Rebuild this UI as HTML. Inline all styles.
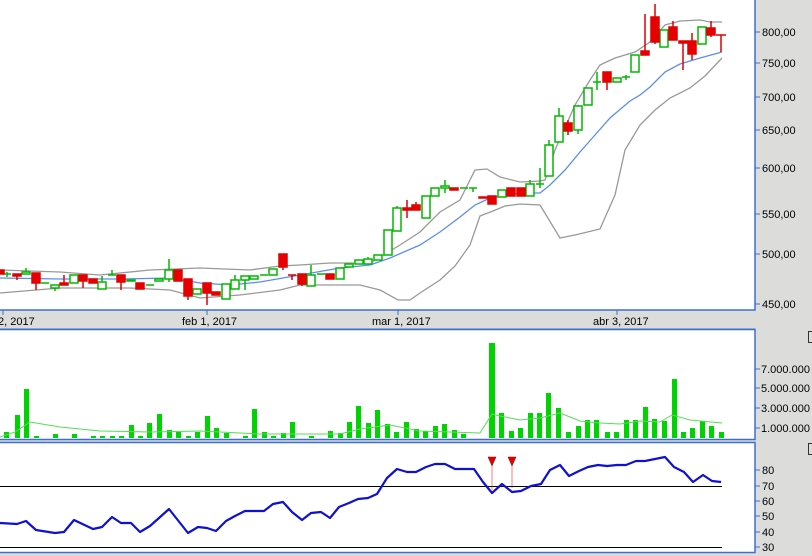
<!DOCTYPE html>
<html><head><meta charset="utf-8"><style>
html,body{margin:0;padding:0;width:812px;height:556px;overflow:hidden;background:#dcdddb;font-family:"Liberation Sans",sans-serif}
svg{position:absolute;left:0;top:0}
text{font-family:"Liberation Sans",sans-serif;font-size:11px;fill:#000}
</style></head><body>
<svg width="812" height="556" viewBox="0 0 812 556">
<rect x="0" y="0" width="812" height="556" fill="#dcdddb"/>
<!-- panels -->
<rect x="-1" y="-1" width="756" height="311" fill="#fff" stroke="#3b6fcf" stroke-width="1.5"/>
<rect x="-1" y="329.5" width="756" height="110" fill="#fff" stroke="#3b6fcf" stroke-width="1.5"/>
<rect x="-1" y="442.5" width="756" height="110" fill="#fff" stroke="#3b6fcf" stroke-width="1.5"/>
<line x1="0" y1="329" x2="755" y2="329" stroke="#3b6fcf" stroke-width="1"/>
<!-- date axis -->
<g stroke="#3b6fcf"><line x1="3" y1="310" x2="3" y2="315"/><line x1="207" y1="310" x2="207" y2="315"/><line x1="398" y1="310" x2="398" y2="315"/><line x1="617" y1="310" x2="617" y2="315"/></g>
<text x="-2" y="325">2, 2017</text>
<text x="182" y="325">feb 1, 2017</text>
<text x="372" y="325">mar 1, 2017</text>
<text x="593" y="325">abr 3, 2017</text>
<!-- price axis -->
<g stroke="#3b6fcf"><line x1="755" y1="32" x2="760" y2="32"/><line x1="755" y1="63" x2="760" y2="63"/><line x1="755" y1="97" x2="760" y2="97"/><line x1="755" y1="130" x2="760" y2="130"/><line x1="755" y1="168" x2="760" y2="168"/><line x1="755" y1="214" x2="760" y2="214"/><line x1="755" y1="254" x2="760" y2="254"/><line x1="755" y1="304" x2="760" y2="304"/></g>
<text x="762" y="36">800,00</text><text x="762" y="67">750,00</text><text x="762" y="101">700,00</text><text x="762" y="134">650,00</text><text x="762" y="172">600,00</text><text x="762" y="218">550,00</text><text x="762" y="258">500,00</text><text x="762" y="308">450,00</text>
<!-- volume axis -->
<g stroke="#3b6fcf"><line x1="755" y1="369" x2="760" y2="369"/><line x1="755" y1="388" x2="760" y2="388"/><line x1="755" y1="408" x2="760" y2="408"/><line x1="755" y1="428" x2="760" y2="428"/></g>
<text x="761" y="373">7.000.000</text><text x="761" y="392">5.000.000</text><text x="761" y="412">3.000.000</text><text x="761" y="432">1.000.000</text>
<!-- rsi axis -->
<g stroke="#3b6fcf"><line x1="755" y1="470" x2="760" y2="470"/><line x1="755" y1="486" x2="760" y2="486"/><line x1="755" y1="501" x2="760" y2="501"/><line x1="755" y1="516" x2="760" y2="516"/><line x1="755" y1="532" x2="760" y2="532"/><line x1="755" y1="547" x2="760" y2="547"/></g>
<text x="762" y="474">80</text><text x="762" y="490">70</text><text x="762" y="505">60</text><text x="762" y="520">50</text><text x="762" y="536">40</text><text x="762" y="551">30</text>
<!-- small boxes -->
<rect x="808.5" y="331.5" width="6" height="11" fill="#dcdddb" stroke="#333"/>
<rect x="808.5" y="443.5" width="6" height="11" fill="#dcdddb" stroke="#333"/>

<!-- bands -->
<polyline fill="none" stroke="#999" stroke-width="1.3" points="0,270 60,272 100,275 150,270 200,268 250,270 280,266 300,265 330,263 370,263 400,245 420,232 440,212 460,200 475,170 487,169 500,177 520,182 540,181 545,180 555,150 575,105 590,80 600,65 615,58 625,55 635,52 650,42 665,25 680,21 700,20 710,22 722,22"/>
<polyline fill="none" stroke="#999" stroke-width="1.3" points="0,293 60,288 100,288 130,288 170,290 200,298 240,295 280,290 300,285 330,285 360,285 380,290 398,300 410,300 420,293 440,280 455,266 470,245 480,216 493,211 505,206 520,204 540,205 560,238 575,235 600,229 615,195 625,150 640,125 655,110 670,98 690,88 705,76 722,58"/>
<polyline fill="none" stroke="#5b8cf5" stroke-width="1.3" points="0,278 60,279 120,279 170,278 200,283 230,285 260,282 300,275 340,268 370,265 390,258 420,245 440,232 460,217 475,205 490,198 520,193 540,193 550,185 565,170 580,152 595,135 610,118 630,101 640,95 650,87 665,72 680,64 700,58 722,52"/>

<!-- candles -->
<g stroke-width="1.5">
<g stroke="#00b800" fill="#fff">
<line x1="7" y1="272" x2="7" y2="277"/><line x1="3" y1="274" x2="11" y2="274"/>
<line x1="26" y1="268" x2="26" y2="272"/><rect x="22" y="272" width="8" height="2"/>
<line x1="41" y1="283" x2="49" y2="283"/>
<line x1="55" y1="288" x2="55" y2="291"/><rect x="51" y="285" width="8" height="3"/>
<rect x="70" y="275" width="8" height="8"/>
<line x1="102" y1="276" x2="102" y2="282"/><rect x="98" y="282" width="8" height="7"/>
<line x1="112" y1="270" x2="112" y2="275"/><line x1="108" y1="275" x2="116" y2="275"/>
<rect x="127" y="280" width="8" height="1"/>
<line x1="146" y1="285" x2="154" y2="285"/>
<rect x="155" y="279" width="8" height="2"/>
<line x1="169" y1="259" x2="169" y2="282"/><rect x="165" y="270" width="8" height="9"/>
<rect x="193" y="289" width="8" height="5"/>
<rect x="222" y="284" width="8" height="15"/>
<line x1="235" y1="275" x2="235" y2="280"/><rect x="231" y="280" width="8" height="9"/>
<line x1="245" y1="280" x2="245" y2="290"/><rect x="241" y="276" width="8" height="4"/>
<rect x="250" y="276" width="8" height="3"/>
<line x1="260" y1="275" x2="268" y2="275"/>
<rect x="269" y="269" width="8" height="6"/>
<line x1="311" y1="265" x2="311" y2="275"/><rect x="307" y="275" width="8" height="11"/>
<line x1="317" y1="274" x2="325" y2="274"/>
<rect x="336" y="268" width="8" height="11"/>
<rect x="345" y="264" width="8" height="3"/>
<rect x="355" y="260" width="8" height="4"/>
<line x1="368" y1="257" x2="368" y2="259"/><rect x="364" y="259" width="8" height="5"/>
<rect x="374" y="255" width="8" height="5"/>
<rect x="384" y="230" width="8" height="25"/>
<line x1="397" y1="206" x2="397" y2="208"/><rect x="393" y="208" width="8" height="23"/>
<rect x="422" y="196" width="8" height="22"/>
<rect x="431" y="188" width="8" height="8"/>
<line x1="445" y1="180" x2="445" y2="193"/><rect x="441" y="186" width="8" height="2"/>
<line x1="460" y1="188" x2="468" y2="188"/><line x1="469" y1="188" x2="477" y2="188"/><line x1="473" y1="188" x2="473" y2="192"/>
<rect x="498" y="190" width="8" height="7"/>
<line x1="530" y1="180" x2="530" y2="184"/><rect x="526" y="184" width="8" height="12"/>
<line x1="540" y1="168" x2="540" y2="188"/><line x1="536" y1="184" x2="544" y2="184"/>
<line x1="549" y1="140" x2="549" y2="145"/><rect x="545" y="145" width="8" height="31"/>
<line x1="559" y1="108" x2="559" y2="116"/><rect x="555" y="116" width="8" height="26"/>
<line x1="578" y1="105" x2="578" y2="134"/><rect x="574" y="106" width="8" height="24"/>
<rect x="584" y="88" width="8" height="17"/>
<line x1="597" y1="72" x2="597" y2="90"/><line x1="593" y1="82" x2="601" y2="82"/>
<rect x="613" y="78" width="8" height="4"/>
<line x1="622" y1="77" x2="630" y2="77"/><line x1="626" y1="75" x2="626" y2="80"/>
<rect x="631" y="55" width="8" height="17"/>
<rect x="660" y="30" width="8" height="17"/>
<rect x="698" y="27" width="8" height="17"/>
</g>
<g stroke="#e00000" fill="#e80000">
<rect x="-4" y="270" width="8" height="4"/>
<line x1="17" y1="274" x2="17" y2="280"/><rect x="13" y="274" width="8" height="2"/>
<line x1="36" y1="283" x2="36" y2="290"/><rect x="32" y="273" width="8" height="10"/>
<line x1="64" y1="275" x2="64" y2="283"/><rect x="60" y="283" width="8" height="2"/>
<line x1="83" y1="281" x2="83" y2="288"/><rect x="79" y="275" width="8" height="6"/>
<rect x="89" y="279" width="8" height="4"/>
<line x1="121" y1="282" x2="121" y2="290"/><rect x="117" y="275" width="8" height="7"/>
<rect x="136" y="283" width="8" height="6"/>
<rect x="174" y="270" width="8" height="11"/>
<line x1="188" y1="296" x2="188" y2="300"/><rect x="184" y="279" width="8" height="17"/>
<line x1="207" y1="293" x2="207" y2="305"/><rect x="203" y="283" width="8" height="10"/>
<rect x="212" y="292" width="8" height="3"/>
<line x1="283" y1="267" x2="283" y2="270"/><rect x="279" y="254" width="8" height="13"/>
<line x1="292" y1="275" x2="292" y2="280"/><line x1="288" y1="275" x2="296" y2="275"/>
<line x1="302" y1="284" x2="302" y2="286"/><rect x="298" y="274" width="8" height="10"/>
<rect x="326" y="274" width="8" height="5"/>
<line x1="407" y1="200" x2="407" y2="218"/><rect x="403" y="208" width="8" height="2"/>
<line x1="416" y1="202" x2="416" y2="205"/><rect x="412" y="205" width="8" height="5"/>
<rect x="450" y="188" width="8" height="2"/>
<rect x="479" y="197" width="8" height="1"/>
<rect x="488" y="196" width="8" height="8"/>
<rect x="507" y="188" width="8" height="8"/>
<rect x="517" y="188" width="8" height="8"/>
<line x1="568" y1="120" x2="568" y2="135"/><rect x="564" y="123" width="8" height="8"/>
<line x1="607" y1="82" x2="607" y2="90"/><rect x="603" y="72" width="8" height="10"/>
<line x1="645" y1="14" x2="645" y2="51"/><rect x="641" y="51" width="8" height="4"/>
<line x1="655" y1="4" x2="655" y2="44"/><rect x="651" y="17" width="8" height="25"/>
<line x1="673" y1="21" x2="673" y2="27"/><rect x="669" y="27" width="8" height="13"/>
<line x1="683" y1="43" x2="683" y2="70"/><rect x="679" y="41" width="8" height="2"/>
<line x1="692" y1="33" x2="692" y2="60"/><rect x="688" y="41" width="8" height="13"/>
<line x1="711" y1="21" x2="711" y2="37"/><rect x="707" y="28" width="8" height="7"/>
<line x1="721" y1="35" x2="721" y2="52"/><line x1="716" y1="35" x2="726" y2="35"/>
</g>
</g>

<!-- volume -->
<g fill="#00d400">
<rect x="4" y="432" width="5" height="6"/><rect x="15" y="415" width="5" height="23"/><rect x="24" y="389" width="5" height="49"/><rect x="34" y="436" width="5" height="2"/><rect x="53" y="434" width="5" height="4"/><rect x="72" y="434" width="5" height="4"/><rect x="91" y="436" width="5" height="2"/><rect x="100" y="436" width="5" height="2"/><rect x="110" y="436" width="5" height="2"/><rect x="119" y="436" width="5" height="2"/>
<rect x="129" y="425" width="5" height="13"/><rect x="138" y="436" width="5" height="2"/><rect x="147" y="423" width="5" height="15"/><rect x="157" y="414" width="5" height="24"/><rect x="167" y="430" width="5" height="8"/><rect x="176" y="432" width="5" height="6"/><rect x="186" y="436" width="5" height="2"/><rect x="195" y="432" width="5" height="6"/><rect x="205" y="416" width="5" height="22"/><rect x="214" y="428" width="5" height="10"/><rect x="224" y="433" width="5" height="5"/><rect x="243" y="436" width="5" height="2"/>
<rect x="252" y="409" width="5" height="29"/><rect x="262" y="432" width="5" height="6"/><rect x="271" y="436" width="5" height="2"/><rect x="281" y="433" width="5" height="5"/><rect x="290" y="422" width="5" height="16"/><rect x="309" y="436" width="5" height="2"/><rect x="328" y="431" width="5" height="7"/><rect x="338" y="433" width="5" height="5"/><rect x="347" y="422" width="5" height="16"/><rect x="356" y="406" width="5" height="32"/><rect x="366" y="423" width="5" height="15"/><rect x="375" y="410" width="5" height="28"/><rect x="385" y="424" width="5" height="14"/><rect x="394" y="432" width="5" height="6"/><rect x="404" y="422" width="5" height="16"/><rect x="414" y="429" width="5" height="9"/><rect x="423" y="431" width="5" height="7"/><rect x="433" y="426" width="5" height="12"/><rect x="442" y="424" width="5" height="14"/><rect x="452" y="430" width="5" height="8"/><rect x="461" y="434" width="5" height="4"/>
<rect x="489" y="343" width="6" height="95"/><rect x="499" y="413" width="5" height="25"/><rect x="509" y="431" width="5" height="7"/><rect x="518" y="428" width="5" height="10"/><rect x="528" y="413" width="5" height="25"/><rect x="537" y="413" width="5" height="25"/><rect x="546" y="393" width="5" height="45"/><rect x="556" y="408" width="5" height="30"/><rect x="566" y="432" width="5" height="6"/><rect x="576" y="426" width="5" height="12"/><rect x="585" y="420" width="5" height="18"/><rect x="594" y="420" width="5" height="18"/><rect x="605" y="432" width="5" height="6"/><rect x="614" y="432" width="5" height="6"/><rect x="624" y="420" width="5" height="18"/><rect x="633" y="420" width="5" height="18"/><rect x="643" y="407" width="5" height="31"/><rect x="652" y="419" width="5" height="19"/><rect x="662" y="421" width="5" height="17"/><rect x="672" y="379" width="5" height="59"/><rect x="681" y="432" width="5" height="6"/><rect x="690" y="428" width="5" height="10"/><rect x="700" y="421" width="5" height="17"/><rect x="709" y="426" width="5" height="12"/><rect x="719" y="432" width="5" height="6"/>
</g>
<polyline fill="none" stroke="#55dd55" stroke-width="1" points="0,437 15,432 30,422 60,427 100,431 150,432 200,431 260,434 340,434 360,429 390,425 400,427 420,431 480,433 492,414 500,416 520,420 540,418 560,413 580,421 600,423 620,424 640,421 660,422 672,415 690,420 722,423"/>

<!-- rsi -->
<line x1="0" y1="486.5" x2="722" y2="486.5" stroke="#000" stroke-width="1"/>
<line x1="0" y1="547.5" x2="722" y2="547.5" stroke="#000" stroke-width="1"/>
<polyline fill="none" stroke="#1010d0" stroke-width="2.2" stroke-linejoin="round" points="0,523 17,524 26,521 36,530 55,533 64,532 74,520 93,529 102,527 112,517 121,523 131,523 140,532 150,526 159,518 169,509 188,533 198,527 207,528 216,531 226,521 235,516 245,511 264,511 273,504 283,502 292,512 302,520 311,513 321,512 330,518 339,507 349,503 358,499 368,498 377,494 387,478 397,469 407,472 416,472 426,467 435,464 445,464 455,469 474,469 483,482 492,493 502,484 512,492 521,491 531,486 541,484 550,470 560,465 569,476 579,471 588,467 598,465 607,466 617,465 626,465 636,461 645,461 655,459 665,457 674,467 684,472 693,482 703,475 712,481 721,482"/>
<g fill="#e00000" stroke="#900" stroke-width="0.5">
<polygon points="488,457 496,457 492,466"/><line x1="492" y1="466" x2="492" y2="490" stroke="#e00000"/>
<polygon points="508,457 516,457 512,466"/><line x1="512" y1="466" x2="512" y2="488" stroke="#e00000"/>
</g>
</svg>
</body></html>
